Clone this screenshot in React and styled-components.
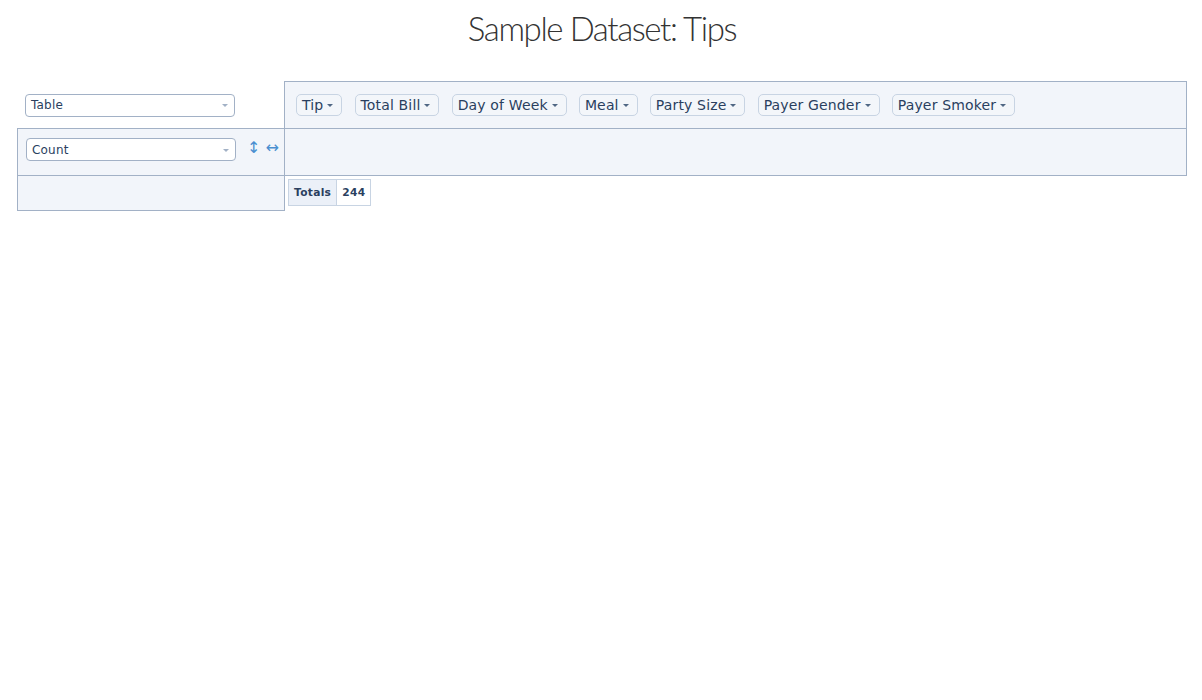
import React from "react"
import styled, { createGlobalStyle } from "styled-components"

const GlobalStyle = createGlobalStyle`
	body {
		margin: 0;
		background: #ffffff;
	}
`

const Page = styled.div`
	padding: 0 15px 0 17px;
	font-family: "DejaVu Sans", Verdana, sans-serif;
	color: #2a3f5f;
`

const Title = styled.h1`
	margin: 8px 0 0;
	height: 40px;
	line-height: 40px;
	text-align: center;
	font-family: Lato, sans-serif;
	font-weight: 300;
	font-size: 33px;
	letter-spacing: -1.4px;
	color: #333333;
`

const PivotGrid = styled.div`
	display: grid;
	grid-template-columns: 268px 902px;
	grid-template-rows: 48px 47px 35px;
	margin-top: 33px;
`

const Cell = styled.div`
	box-sizing: border-box;
	border: ${(p) => (p.$bordered ? "1px solid #a2b1c6" : "none")};
	background: ${(p) => (p.$bordered ? "#f2f5fa" : "transparent")};
	margin-left: ${(p) => (p.$right ? "-1px" : "0")};
	margin-top: ${(p) => (p.$lower ? "-1px" : "0")};
`

const RendererCell = styled(Cell)`
	display: flex;
	align-items: center;
	padding-left: 8px;
`

const ColsCell = styled(Cell)`
	display: flex;
	align-items: center;
	gap: 12.2px;
	padding: 0 11px;
`

const ValsCell = styled(Cell)`
	display: flex;
	align-items: flex-start;
	padding: 9px 0 0 8px;
`

const OutputCell = styled(Cell)`
	padding: 4px 0 0 4px;
`

const Dropdown = styled.div`
	box-sizing: border-box;
	width: 210px;
	height: 23px;
	border: 1px solid #a2b1c6;
	border-radius: 4px;
	background: #ffffff;
	padding: 0 5px;
	display: flex;
	align-items: center;
	justify-content: space-between;
	font-size: 12px;
	letter-spacing: 0.2px;
	color: #2a3f5f;
`

const DropdownIcon = styled.span`
	width: 0;
	height: 0;
	border-left: 3px solid transparent;
	border-right: 3px solid transparent;
	border-top: 3px solid #a2b1c6;
	margin-right: 1px;
	margin-top: 1px;
`

const OrderButton = styled.span`
	font-size: 16px;
	line-height: 20px;
	color: #4a8fd0;
	margin-left: ${(p) => p.$gap}px;
	cursor: pointer;
`

const Attr = styled.span`
	display: inline-flex;
	align-items: center;
	box-sizing: border-box;
	height: 22px;
	padding: 2px 5px;
	border: 1px solid #c8d4e3;
	border-radius: 5px;
	background: #f3f6fa;
	font-size: 14px;
	line-height: 16px;
	letter-spacing: 0.15px;
	white-space: nowrap;
	color: #2a3f5f;
`

const Triangle = styled.span`
	width: 0;
	height: 0;
	border-left: 3px solid transparent;
	border-right: 3px solid transparent;
	border-top: 3px solid #506784;
	margin: 1px 3px 0 4px;
`

const OutputTable = styled.table`
	border-collapse: collapse;
	font-size: 8pt;
	font-weight: bold;
	letter-spacing: 0.3px;
	color: #2a3f5f;
	th,
	td {
		border: 1px solid #c8d4e3;
		padding: 5px;
		line-height: 15px;
	}
	th {
		background: #ebf0f8;
		text-align: left;
	}
	td {
		background: #ffffff;
		text-align: right;
	}
`

const attributes = [
	"Tip",
	"Total Bill",
	"Day of Week",
	"Meal",
	"Party Size",
	"Payer Gender",
	"Payer Smoker",
]

const App = () => (
	<Page>
		<GlobalStyle />
		<Title>Sample Dataset: Tips</Title>

		<PivotGrid>
			<RendererCell>
				<Dropdown>
					<span>Table</span>
					<DropdownIcon />
				</Dropdown>
			</RendererCell>

			<ColsCell $bordered $right>
				{attributes.map((name) => (
					<Attr key={name}>
						{name}
						<Triangle />
					</Attr>
				))}
			</ColsCell>

			<ValsCell $bordered $lower>
				<Dropdown>
					<span>Count</span>
					<DropdownIcon />
				</Dropdown>
				<OrderButton $gap={11}>↕</OrderButton>
				<OrderButton $gap={5}>↔</OrderButton>
			</ValsCell>

			<Cell $bordered $right $lower />

			<Cell $bordered $lower />

			<OutputCell $right $lower>
				<OutputTable>
					<tbody>
						<tr>
							<th>Totals</th>
							<td>244</td>
						</tr>
					</tbody>
				</OutputTable>
			</OutputCell>
		</PivotGrid>
	</Page>
)

export default App
